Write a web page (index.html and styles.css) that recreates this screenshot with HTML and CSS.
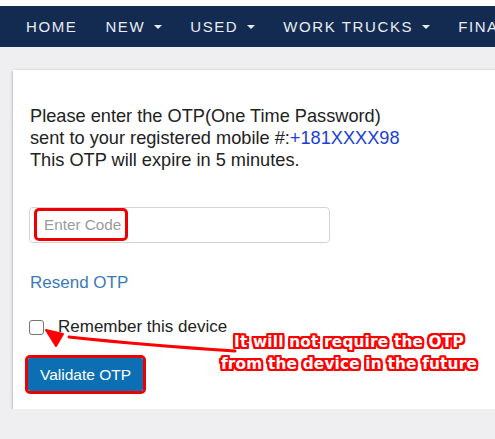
FILE: index.html
```html
<!DOCTYPE html>
<html>
<head>
<meta charset="utf-8">
<link rel="stylesheet" href="styles.css">
</head>
<body>
<div class="topstrip"></div>
<nav class="nav">
  <a class="nav-item">HOME</a>
  <a class="nav-item">NEW<span class="caret"></span></a>
  <a class="nav-item">USED<span class="caret"></span></a>
  <a class="nav-item">WORK TRUCKS<span class="caret"></span></a>
  <a class="nav-item">FINANCE</a>
</nav>
<main class="main">
  <section class="card">
    <p class="intro">Please enter the OTP(One Time Password)<br>sent to your registered mobile #:<span class="phone">+181XXXX98</span><br>This OTP will expire in 5 minutes.</p>
    <div class="input-box"><span class="placeholder">Enter Code</span></div>
    <a class="resend">Resend OTP</a>
    <label class="remember"><span class="check"></span><span>Remember this device</span></label>
    <div class="btn-wrap"><button class="btn">Validate OTP</button></div>
    <svg class="arrow" width="240" height="40" viewBox="0 0 240 40">
      <path d="M222 33 Q 130 27 56 19" fill="none" stroke="#ff0000" stroke-width="3" stroke-linecap="round"/>
      <path d="M33 12 L 43 28 L 50 16 Z" fill="#ff0000" stroke="#ff0000" stroke-width="2" stroke-linejoin="round"/>
    </svg>
    <div class="note">It will not require the OTP<br>from the device in the future</div>
  </section>
</main>
</body>
</html>
```
FILE: styles.css
```css
html, body {
  margin: 0;
  padding: 0;
  background: #efeef0;
  font-family: "Liberation Sans", Arial, sans-serif;
  overflow: hidden;
}
.topstrip {
  height: 6px;
  background: #ffffff;
}
.nav {
  height: 41px;
  background: #132b50;
  display: flex;
  align-items: center;
  padding-left: 26px;
  white-space: nowrap;
  overflow: hidden;
}
.nav-item {
  color: #e9edf3;
  font-size: 15px;
  letter-spacing: 1.6px;
  margin-right: 28px;
  display: flex;
  align-items: center;
  flex-shrink: 0;
}
.caret {
  display: inline-block;
  width: 0;
  height: 0;
  border-left: 4px solid transparent;
  border-right: 4px solid transparent;
  border-top: 4px solid #e9edf3;
  margin-left: 9px;
}
.main {
  padding: 23px 0 0 13px;
}
.card {
  position: relative;
  background: #ffffff;
  width: 520px;
  height: 339px;
  padding: 35px 0 0 17px;
  box-sizing: border-box;
  box-shadow: 0 1px 3px rgba(0,0,0,0.35);
}
.intro {
  margin: 0;
  font-size: 18.2px;
  line-height: 22px;
  color: #222222;
}
.phone {
  color: #1a3fd6;
}
.input-box {
  margin-top: 36px;
  margin-left: -1px;
  width: 301px;
  height: 36px;
  box-sizing: border-box;
  border: 1px solid #d4d4d4;
  border-radius: 4px;
  position: relative;
}
.placeholder {
  position: absolute;
  left: 4px;
  top: 0;
  height: 33px;
  width: 94px;
  box-sizing: border-box;
  border: 3px solid #ee0000;
  border-radius: 5px;
  color: #9a9a9a;
  font-size: 15.3px;
  display: flex;
  align-items: center;
  padding-left: 7px;
  white-space: nowrap;
}
.resend {
  display: block;
  margin-top: 29px;
  color: #3a7ab8;
  font-size: 17px;
  line-height: 22px;
}
.remember {
  display: flex;
  align-items: center;
  margin-top: 22px;
  font-size: 17px;
  color: #222222;
  line-height: 22px;
}
.check {
  width: 13px;
  height: 13px;
  border: 1px solid #767676;
  border-radius: 3px;
  margin-left: -1px;
  margin-right: 14px;
  background: #fff;
}
.btn-wrap {
  margin-top: 17px;
  margin-left: -5px;
  width: 121px;
  height: 39px;
  box-sizing: border-box;
  border: 3px solid #ee0000;
  border-radius: 5px;
  display: flex;
}
.btn {
  flex: 1;
  margin: 0;
  border: 0;
  background: #0c6fb3;
  color: #ffffff;
  font-family: "Liberation Sans", Arial, sans-serif;
  font-size: 15.5px;
  padding: 0;
  border-radius: 2px;
}
.arrow {
  position: absolute;
  left: 0;
  top: 248px;
}
.note {
  position: absolute;
  left: 201px;
  top: 261px;
  width: 270px;
  text-align: center;
  font-family: "DejaVu Sans", sans-serif;
  font-weight: bold;
  font-size: 15.3px;
  line-height: 22px;
  color: #ffffff;
  letter-spacing: 0.2px;
  text-shadow:
    2px 0 0 #f00, -2px 0 0 #f00, 0 2px 0 #f00, 0 -2px 0 #f00,
    2px 2px 0 #f00, -2px -2px 0 #f00, 2px -2px 0 #f00, -2px 2px 0 #f00,
    1px 2px 0 #f00, 2px 1px 0 #f00, -1px 2px 0 #f00, -2px 1px 0 #f00,
    1px -2px 0 #f00, 2px -1px 0 #f00, -1px -2px 0 #f00, -2px -1px 0 #f00;
}
```
